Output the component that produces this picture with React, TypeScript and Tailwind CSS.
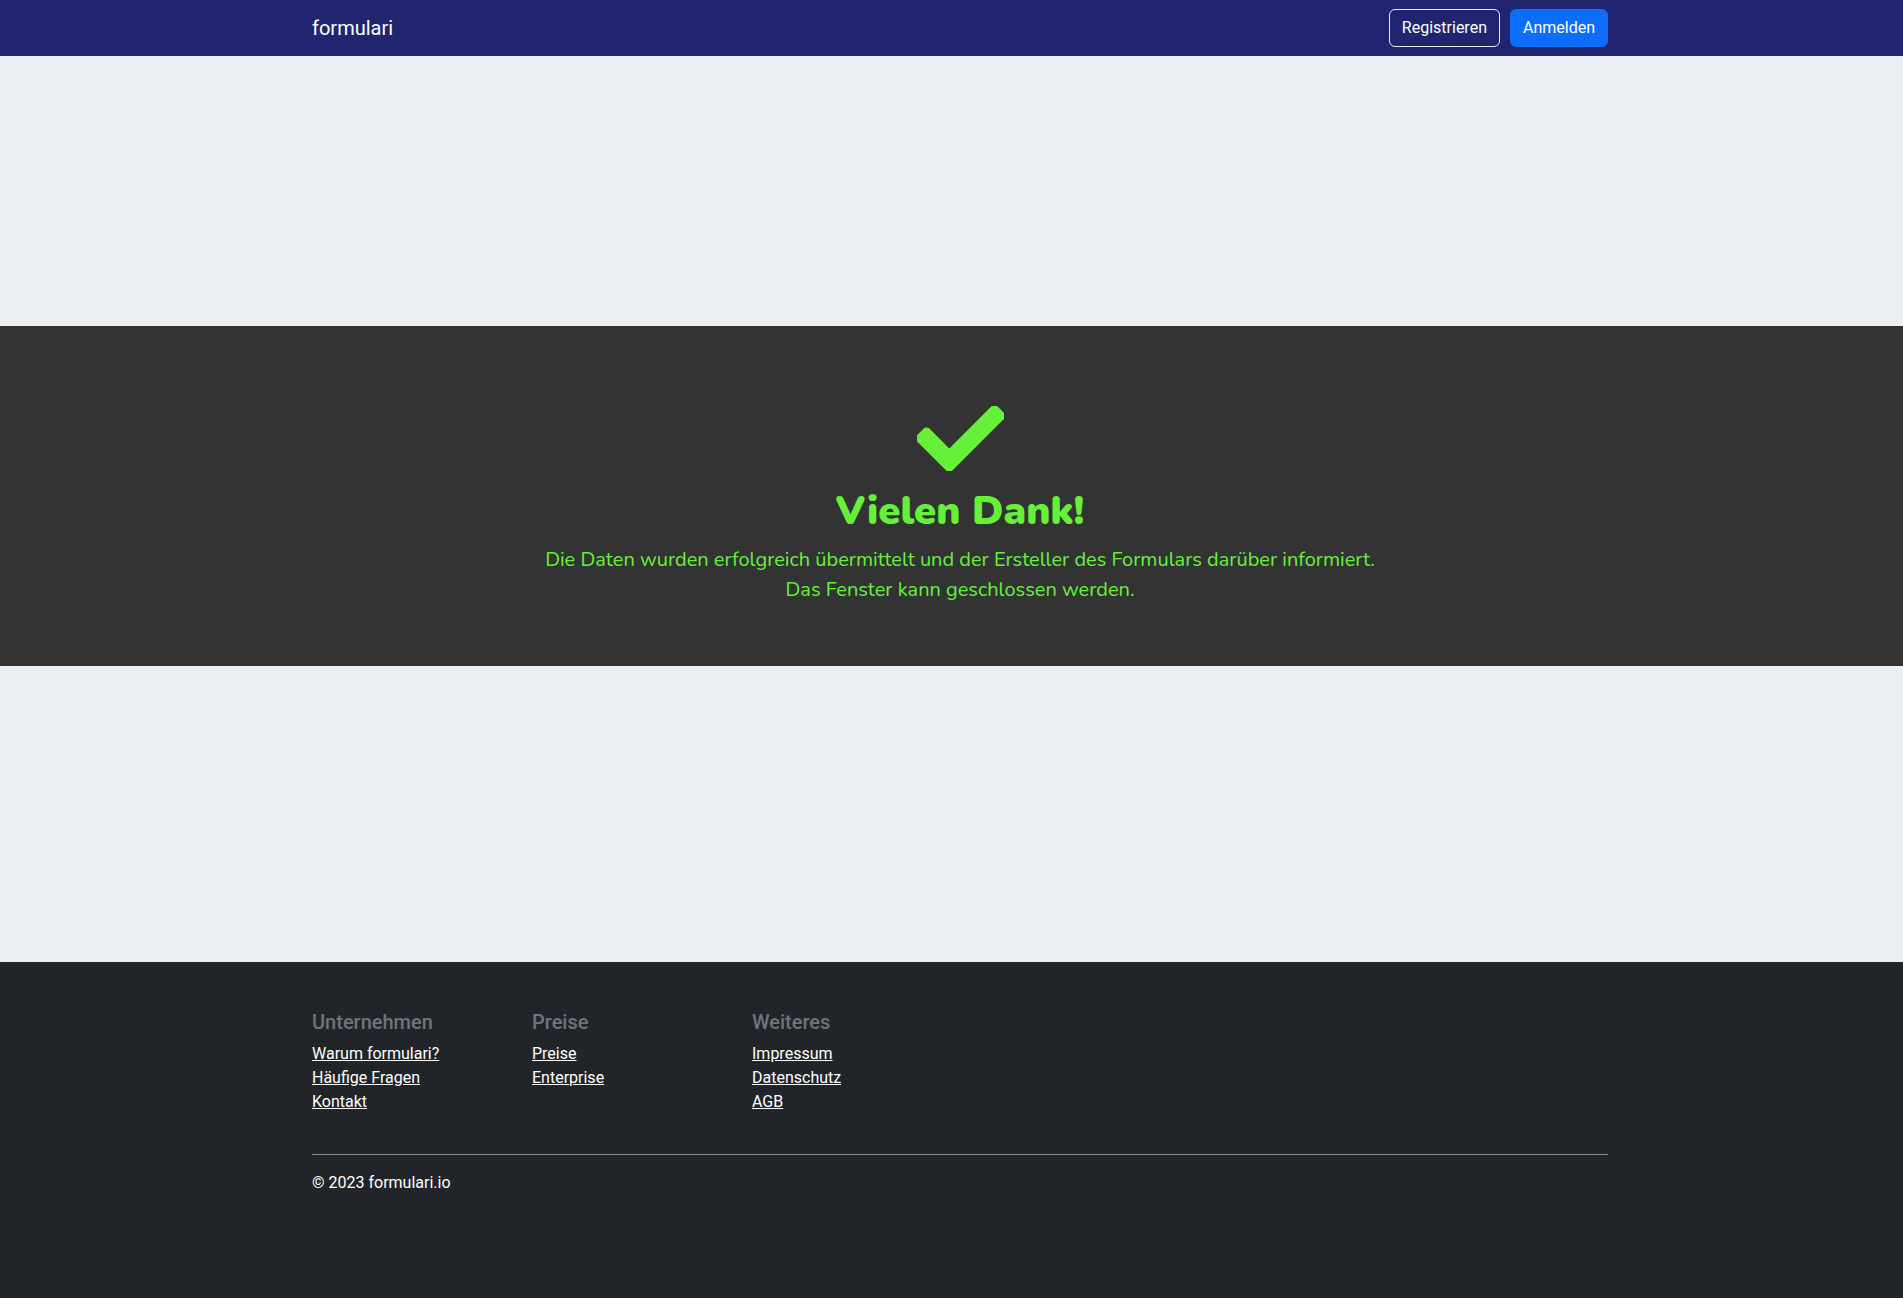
import React from "react";

const CheckIcon = () => (
  <svg
    viewBox="7 72 498 368"
    className="block mx-auto w-[87px] h-[65px]"
    fill="#66f03a"
  >
    <path d="M173.898 439.404l-166.4-166.4c-9.997-9.997-9.997-26.206 0-36.204l36.203-36.204c9.997-9.998 26.207-9.998 36.204 0L192 312.69 432.095 72.596c9.997-9.997 26.207-9.997 36.204 0l36.203 36.204c9.997 9.997 9.997 26.206 0 36.204l-294.4 294.401c-9.998 9.997-26.207 9.997-36.204-.001z" />
  </svg>
);

const footerCols = [
  { title: "Unternehmen", links: ["Warum formulari?", "Häufige Fragen", "Kontakt"] },
  { title: "Preise", links: ["Preise", "Enterprise"] },
  { title: "Weiteres", links: ["Impressum", "Datenschutz", "AGB"] },
];

export default function App() {
  return (
    <div className="min-h-screen flex flex-col font-['Roboto',sans-serif] bg-[#eaeff3]">
      {/* Navbar */}
      <nav className="bg-[#212570] h-[56px]">
        <div className="ml-[312px] w-[1296px] h-full flex items-center justify-between">
          <a href="#" className="text-white text-[20px] leading-none">
            formulari
          </a>
          <div className="flex items-center gap-[10px]">
            <button className="h-[38px] px-[12px] rounded-[6px] border border-[#e9ecef] text-white text-[16px]">
              Registrieren
            </button>
            <button className="h-[38px] px-[12px] rounded-[6px] bg-[#0d6efd] border border-[#0d6efd] text-white text-[16px]">
              Anmelden
            </button>
          </div>
        </div>
      </nav>

      <div className="h-[270px]" />

      {/* Success band */}
      <section className="bg-[#333333] pt-[80px] pb-[61px]">
        <div className="ml-[312px] w-[1296px] text-center text-[#66f03a] font-['Nunito','Lato',sans-serif]">
          <CheckIcon />
          <h1 className="mt-[16px] text-[40px] leading-[48px] font-black">
            Vielen Dank!
          </h1>
          <p className="mt-[10px] text-[20px] leading-[30px]">
            Die Daten wurden erfolgreich übermittelt und der Ersteller des Formulars darüber informiert.
            <br />
            Das Fenster kann geschlossen werden.
          </p>
        </div>
      </section>

      <div className="h-[296px]" />

      {/* Footer */}
      <footer className="bg-[#212529] flex-1 pt-[48px] pb-[100px]">
        <div className="ml-[312px] w-[1296px]">
          <div className="flex">
            {footerCols.map((col) => (
              <div key={col.title} className="w-[220px]">
                <h5 className="text-[#6c757d] text-[20px] leading-[24px] font-medium mb-[8px]">
                  {col.title}
                </h5>
                <ul className="mb-[16px]">
                  {col.links.map((link) => (
                    <li key={link} className="text-[16px] leading-[24px]">
                      <a href="#" className="text-white underline">
                        {link}
                      </a>
                    </li>
                  ))}
                </ul>
              </div>
            ))}
          </div>
          <div className="mt-[24px] border-t border-[#868a8f] pt-[16px]">
            <p className="text-white text-[16px] leading-[24px]">© 2023 formulari.io</p>
          </div>
        </div>
      </footer>
    </div>
  );
}
